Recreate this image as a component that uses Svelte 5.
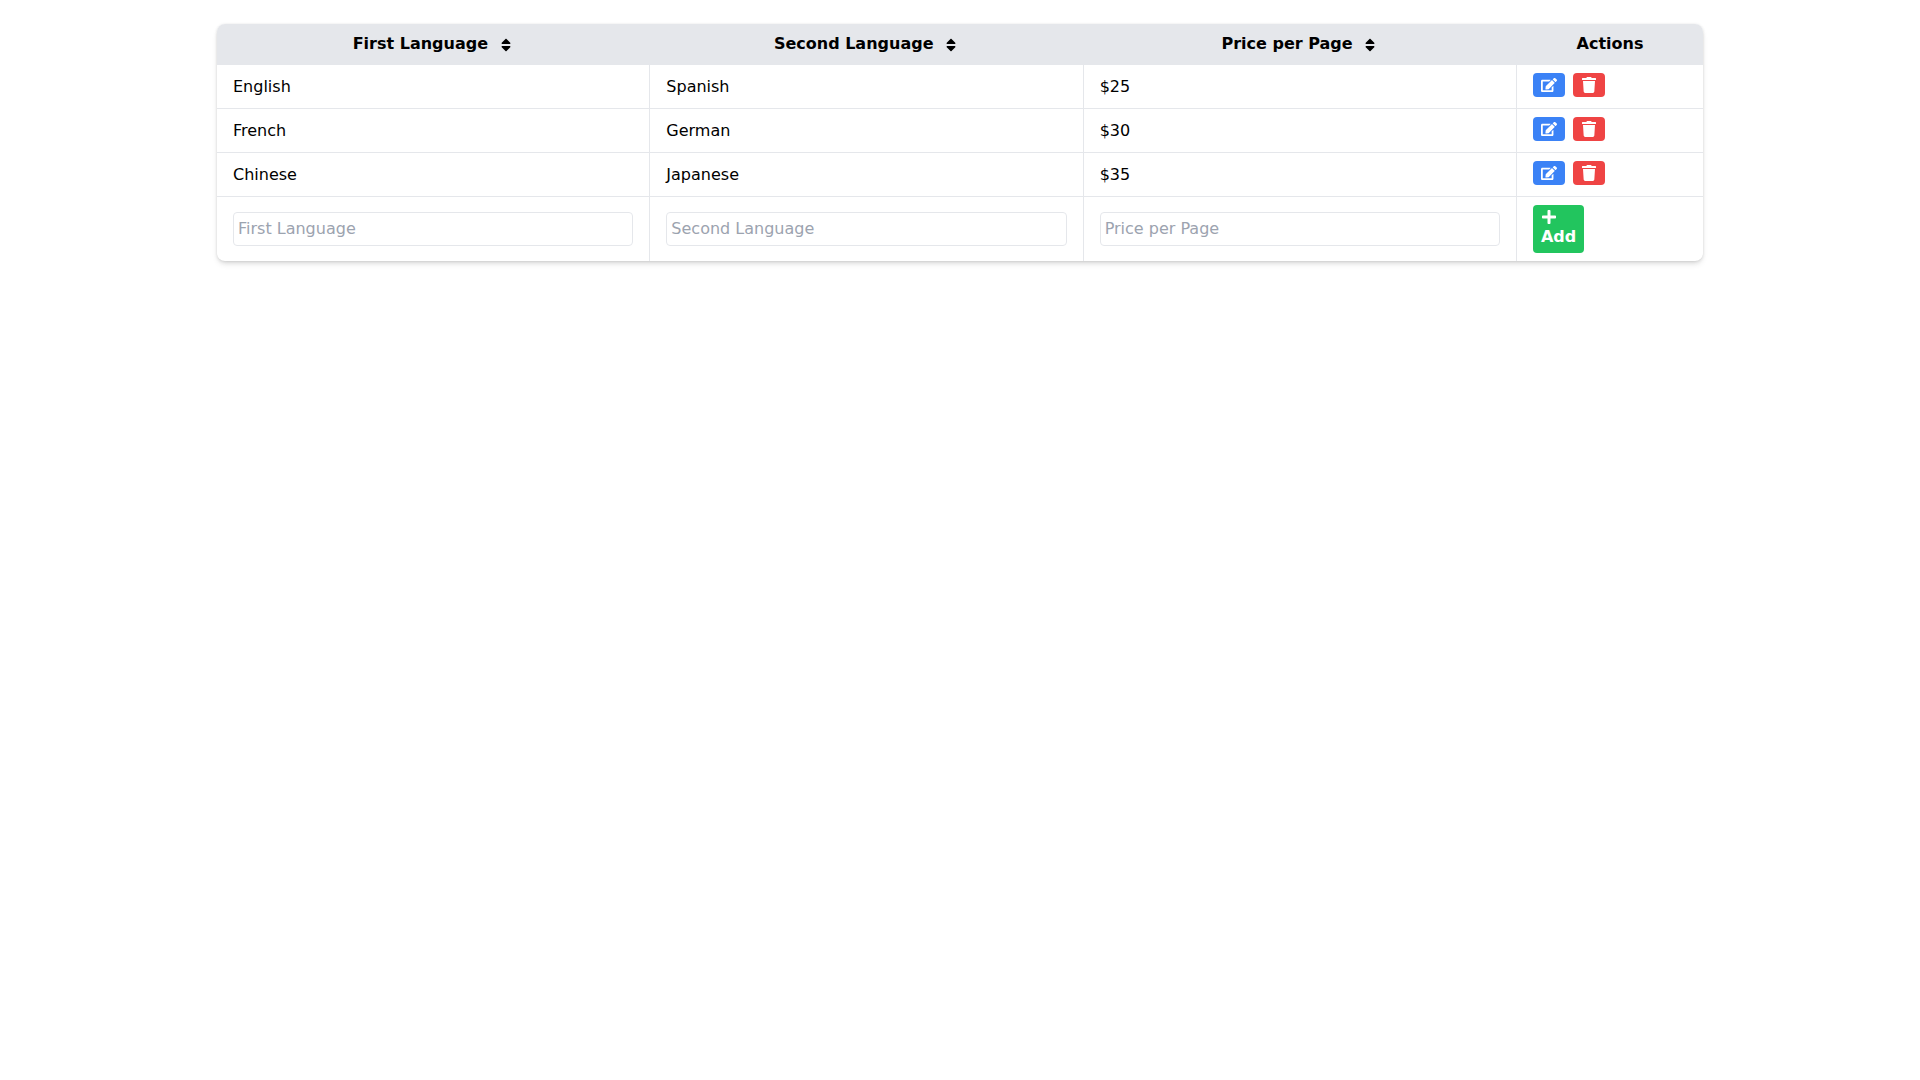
<script>
	const sortPath =
		'M41 288h238c21.4 0 32.1 25.9 17 41L177 448c-9.4 9.4-24.6 9.4-33.9 0L24 329c-15.1-15.1-4.4-41 17-41zm255-105L177 64c-9.4-9.4-24.6-9.4-33.9 0L24 183c-15.1 15.1-4.4 41 17 41h238c21.4 0 32.1-25.9 17-41z';

	let rows = $state([
		{ first: 'English', second: 'Spanish', price: 25 },
		{ first: 'French', second: 'German', price: 30 },
		{ first: 'Chinese', second: 'Japanese', price: 35 }
	]);

	const columns = ['First Language', 'Second Language', 'Price per Page'];
</script>

<main class="page">
	<div class="card">
		<table>
			<colgroup>
				<col class="col-text" />
				<col class="col-text" />
				<col class="col-text" />
				<col class="col-actions" />
			</colgroup>
			<thead>
				<tr>
					{#each columns as column}
						<th>
							{column}
							<svg class="sort" viewBox="0 0 320 512" aria-hidden="true"><path d={sortPath} /></svg>
						</th>
					{/each}
					<th>Actions</th>
				</tr>
			</thead>
			<tbody>
				{#each rows as row}
					<tr>
						<td>{row.first}</td>
						<td>{row.second}</td>
						<td>${row.price}</td>
						<td class="actions">
							<div class="action-row">
								<button class="btn edit" aria-label="Edit">
									<svg viewBox="0 0 576 512" aria-hidden="true"><path d="M402.6 83.2l90.2 90.2c3.8 3.8 3.8 10 0 13.8L274.4 405.6l-92.8 10.3c-12.4 1.4-22.9-9.1-21.5-21.5l10.3-92.8L388.8 83.2c3.8-3.8 10-3.8 13.8 0zm162-22.9l-48.8-48.8c-15.2-15.2-39.9-15.2-55.2 0l-35.4 35.4c-3.8 3.8-3.8 10 0 13.8l90.2 90.2c3.8 3.8 10 3.8 13.8 0l35.4-35.4c15.2-15.3 15.2-40 0-55.2zM384 346.2V448H64V128h229.8c3.2 0 6.2-1.3 8.5-3.5l40-40c7.6-7.6 2.2-20.5-8.5-20.5H48C21.5 64 0 85.5 0 112v352c0 26.5 21.5 48 48 48h352c26.5 0 48-21.5 48-48V306.2c0-10.7-12.9-16-20.5-8.5l-40 40c-2.2 2.3-3.5 5.3-3.5 8.5z" /></svg>
								</button>
								<button class="btn delete" aria-label="Delete">
									<svg viewBox="0 0 448 512" aria-hidden="true"><path d="M432 32H312l-9.4-18.7A24 24 0 0 0 281.1 0H166.8a23.72 23.72 0 0 0-21.4 13.3L136 32H16A16 16 0 0 0 0 48v32a16 16 0 0 0 16 16h416a16 16 0 0 0 16-16V48a16 16 0 0 0-16-16zM53.2 467a48 48 0 0 0 47.9 45h245.8a48 48 0 0 0 47.9-45L416 128H32z" /></svg>
								</button>
							</div>
						</td>
					</tr>
				{/each}
				<tr>
					{#each columns as column}
						<td><input placeholder={column} /></td>
					{/each}
					<td class="actions">
						<button class="add">
							<svg viewBox="0 0 448 512" aria-hidden="true"><path d="M416 208H272V64c0-17.67-14.33-32-32-32h-32c-17.67 0-32 14.33-32 32v144H32c-17.67 0-32 14.33-32 32v32c0 17.67 14.33 32 32 32h144v144c0 17.67 14.33 32 32 32h32c17.67 0 32-14.33 32-32V304h144c17.67 0 32-14.33 32-32v-32c0-17.67-14.33-32-32-32z" /></svg>
							<span>Add</span>
						</button>
					</td>
				</tr>
			</tbody>
		</table>
	</div>
</main>

<style>
	:global(body) {
		background: #fff;
		font-family: 'DejaVu Sans', sans-serif;
		font-size: 16px;
		line-height: 24px;
		color: #000;
	}

	.page {
		padding-top: 24px;
		padding-bottom: 24px;
	}

	.card {
		width: 1486px;
		margin: 0 auto;
		border-radius: 8px;
		overflow: hidden;
		background: #fff;
		box-shadow: 0 4px 6px -1px rgba(0, 0, 0, 0.1), 0 2px 4px -1px rgba(0, 0, 0, 0.1), 0 0 3px rgba(0, 0, 0, 0.08);
	}

	table {
		width: 100%;
		table-layout: fixed;
		border-collapse: separate;
		border-spacing: 0;
	}

	.col-text {
		width: 433.33px;
	}

	.col-actions {
		width: 186px;
	}

	th {
		height: 41px;
		padding: 7px 16px 9px;
		box-sizing: border-box;
		background: #e5e7eb;
		font-weight: 700;
		text-align: center;
	}

	.sort {
		width: 10px;
		height: 16px;
		margin-left: 7px;
		margin-right: 4px;
		vertical-align: -4px;
	}

	td {
		height: 44px;
		box-sizing: border-box;
		padding: 9px 16px;
		border-right: 1px solid #e5e7eb;
		border-bottom: 1px solid #e5e7eb;
	}

	tr td:last-child {
		border-right: 0;
	}

	tbody tr:last-child td {
		padding: 8px 16px;
		border-bottom: 0;
	}

	.actions {
		vertical-align: top;
		padding-top: 8px;
	}

	.action-row {
		display: flex;
		gap: 8px;
	}

	.btn {
		display: flex;
		align-items: center;
		justify-content: center;
		width: 32px;
		height: 24px;
		padding: 0;
		border: 0;
		border-radius: 4px;
		color: #fff;
	}

	.btn svg {
		width: 16px;
		height: 16px;
		fill: currentColor;
	}

	.edit {
		background: #3b82f6;
	}

	.delete {
		background: #ef4444;
	}

	.add {
		display: block;
		width: 51px;
		height: 48px;
		padding: 0 8px 4px;
		border: 0;
		border-radius: 4px;
		background: #22c55e;
		color: #fff;
		font: 700 16px/24px 'DejaVu Sans', sans-serif;
		text-align: left;
	}

	.add svg {
		display: block;
		width: 14px;
		height: 16px;
		margin: 4px 0 0 1px;
		fill: currentColor;
	}

	.add span {
		display: block;
	}

	input {
		display: block;
		width: 100%;
		height: 34px;
		box-sizing: border-box;
		padding: 3px 4px 5px;
		border: 1px solid #e5e7eb;
		border-radius: 4px;
		background: #fff;
		font: 16px/24px 'DejaVu Sans', sans-serif;
		color: #000;
		outline: none;
	}

	input::placeholder {
		color: #9ca3af;
	}
</style>
